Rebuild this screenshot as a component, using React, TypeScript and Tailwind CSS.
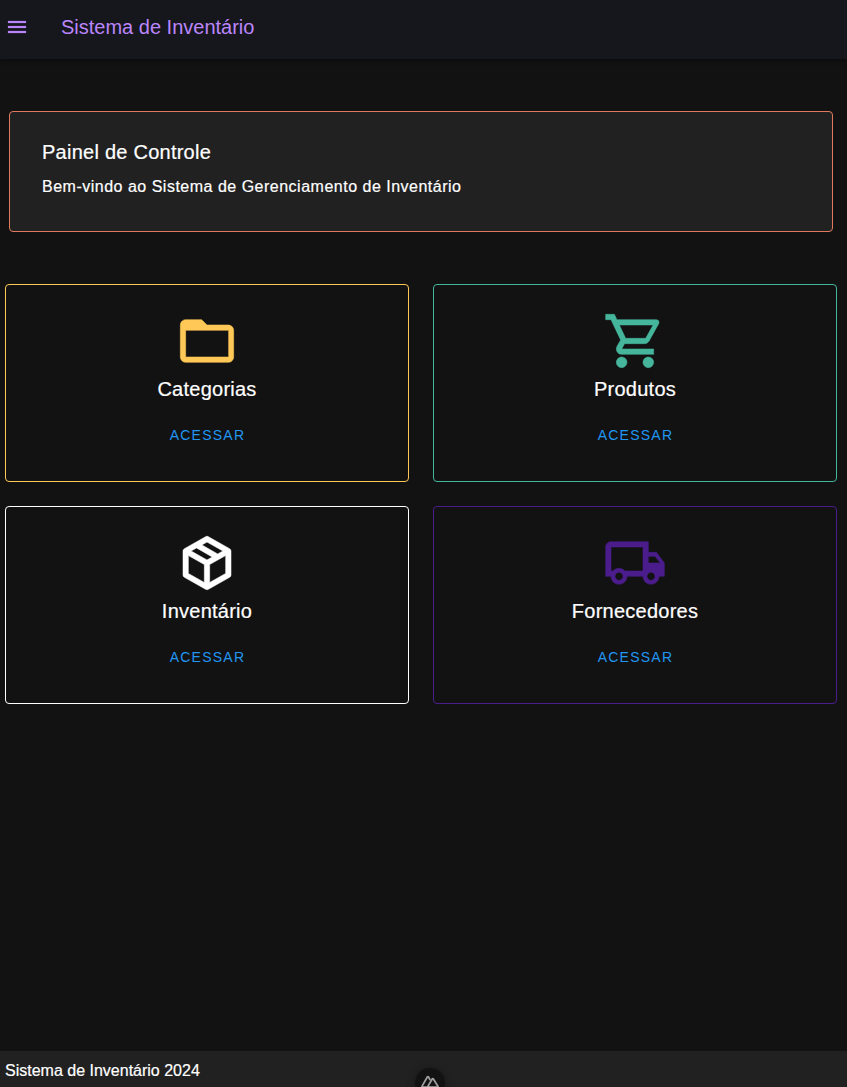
const icons = {
  menu: 'M3,6H21V8H3V6M3,11H21V13H3V11M3,16H21V18H3V16Z',
  folder:
    'M20,18H4V8H20M20,6H12L10,4H4C2.89,4 2,4.89 2,6V18A2,2 0 0,0 4,20H20A2,2 0 0,0 22,18V8C22,6.89 21.1,6 20,6Z',
  cart: 'M17,18A2,2 0 0,1 19,20A2,2 0 0,1 17,22C15.89,22 15,21.1 15,20C15,18.89 15.89,18 17,18M1,2H4.27L5.21,4H20A1,1 0 0,1 21,5C21,5.17 20.95,5.34 20.88,5.5L17.3,11.97C16.96,12.58 16.3,13 15.55,13H8.1L7.2,14.63L7.17,14.75A0.25,0.25 0 0,0 7.42,15H19V17H7C5.89,17 5,16.1 5,15C5,14.65 5.09,14.32 5.24,14.04L6.6,11.59L3,4H1V2M7,18A2,2 0 0,1 9,20A2,2 0 0,1 7,22C5.89,22 5,21.1 5,20C5,18.89 5.89,18 7,18M16,11L18.78,6H6.14L8.5,11H16Z',
  box: 'M21,16.5C21,16.88 20.79,17.21 20.47,17.38L12.57,21.82C12.41,21.94 12.21,22 12,22C11.79,22 11.59,21.94 11.43,21.82L3.53,17.38C3.21,17.21 3,16.88 3,16.5V7.5C3,7.12 3.21,6.79 3.53,6.62L11.43,2.18C11.59,2.06 11.79,2 12,2C12.21,2 12.41,2.06 12.57,2.18L20.47,6.62C20.79,6.79 21,7.12 21,7.5V16.5M12,4.15L10.11,5.22L16,8.61L17.96,7.5L12,4.15M6.04,7.5L12,10.85L13.96,9.75L8.08,6.35L6.04,7.5M5,15.91L11,19.29V12.58L5,9.21V15.91M19,15.91V9.21L13,12.58V19.29L19,15.91Z',
  truck:
    'M18 18.5C18.83 18.5 19.5 17.83 19.5 17C19.5 16.17 18.83 15.5 18 15.5C17.17 15.5 16.5 16.17 16.5 17C16.5 17.83 17.17 18.5 18 18.5M19.5 9.5H17V12H21.46L19.5 9.5M6 18.5C6.83 18.5 7.5 17.83 7.5 17C7.5 16.17 6.83 15.5 6 15.5C5.17 15.5 4.5 16.17 4.5 17C4.5 17.83 5.17 18.5 6 18.5M20 8L23 12V17H21C21 18.66 19.66 20 18 20C16.34 20 15 18.66 15 17H9C9 18.66 7.66 20 6 20C4.34 20 3 18.66 3 17H1V6C1 4.89 1.89 4 3 4H17V8H20M3 6V15H3.76C4.31 14.39 5.11 14 6 14C6.89 14 7.69 14.39 8.24 15H15V6H3Z',
};

const cards = [
  { title: 'Categorias', icon: icons.folder, tone: 'border-[#ffc857] text-[#ffc857]' },
  { title: 'Produtos', icon: icons.cart, tone: 'border-[#45b69c] text-[#45b69c]' },
  { title: 'Inventário', icon: icons.box, tone: 'border-white text-white' },
  { title: 'Fornecedores', icon: icons.truck, tone: 'border-[#4b1d8c] text-[#4b1d8c]' },
];

function Icon({ path, className }: { path: string; className: string }) {
  return (
    <svg
      viewBox="0 0 24 24"
      fill="currentColor"
      stroke="currentColor"
      strokeWidth="0.2"
      aria-hidden="true"
      className={className}
    >
      <path d={path} />
    </svg>
  );
}

export default function App() {
  return (
    <div className="relative flex h-[1087px] flex-col overflow-hidden bg-[#121212] font-['Liberation_Sans',Arial,sans-serif] text-white">
      <header className="flex h-[59px] shrink-0 items-start bg-[#16171d] pt-[15px] pl-[5px] text-[#bb86fc] shadow-[0_2px_4px_rgba(0,0,0,0.35)]">
        <button aria-label="Menu">
          <Icon path={icons.menu} className="size-6" />
        </button>
        <h1 className="ml-8 text-xl leading-6">Sistema de Inventário</h1>
      </header>

      <main className="flex-1 pt-[52px]">
        <section className="mr-[14px] ml-[9px] h-[121px] rounded border border-[#e07a5f] bg-[#212121] px-8 pt-6">
          <h2 className="text-xl leading-8 tracking-[0.25px] [-webkit-text-stroke:0.2px]">Painel de Controle</h2>
          <p className="mt-[7px] text-base leading-6 tracking-[0.5px] [-webkit-text-stroke:0.2px]">
            Bem-vindo ao Sistema de Gerenciamento de Inventário
          </p>
        </section>

        <div className="mt-[52px] mr-[10px] ml-[5px] grid grid-cols-2 gap-6">
          {cards.map((card) => (
            <article
              key={card.title}
              className={`flex h-[198px] flex-col items-center rounded border pt-6 ${card.tone}`}
            >
              <Icon path={card.icon} className="size-16" />
              <h3 className="text-xl leading-8 tracking-[0.25px] text-white [-webkit-text-stroke:0.2px]">{card.title}</h3>
              <button className="mt-3 h-9 pr-4 pl-[17px] text-sm tracking-[1.25px] text-[#2196f3] uppercase">
                Acessar
              </button>
            </article>
          ))}
        </div>
      </main>

      <footer className="flex h-9 shrink-0 items-center bg-[#212121] pt-1 pl-[5px] text-base [-webkit-text-stroke:0.2px]">
        Sistema de Inventário 2024
      </footer>

      <div className="absolute top-[1068px] left-[415px] flex size-[30px] items-center justify-center rounded-full bg-[#121212] text-[#a0a0a0] shadow-[0_0_8px_rgba(0,0,0,0.3)]">
        <svg viewBox="0 0 18 13" fill="none" stroke="currentColor" strokeWidth="1.7" strokeLinejoin="round" className="mb-1 h-[13px] w-[18px]">
          <path d="M9 12H1.5Q.7 12 1.1 11.2L6.3 2Q6.9 1 7.5 2L9.2 5" />
          <path d="M6.5 12L11.2 4Q11.8 3 12.4 4L16.9 11.2Q17.3 12 16.5 12H6.5" />
        </svg>
      </div>
    </div>
  );
}
